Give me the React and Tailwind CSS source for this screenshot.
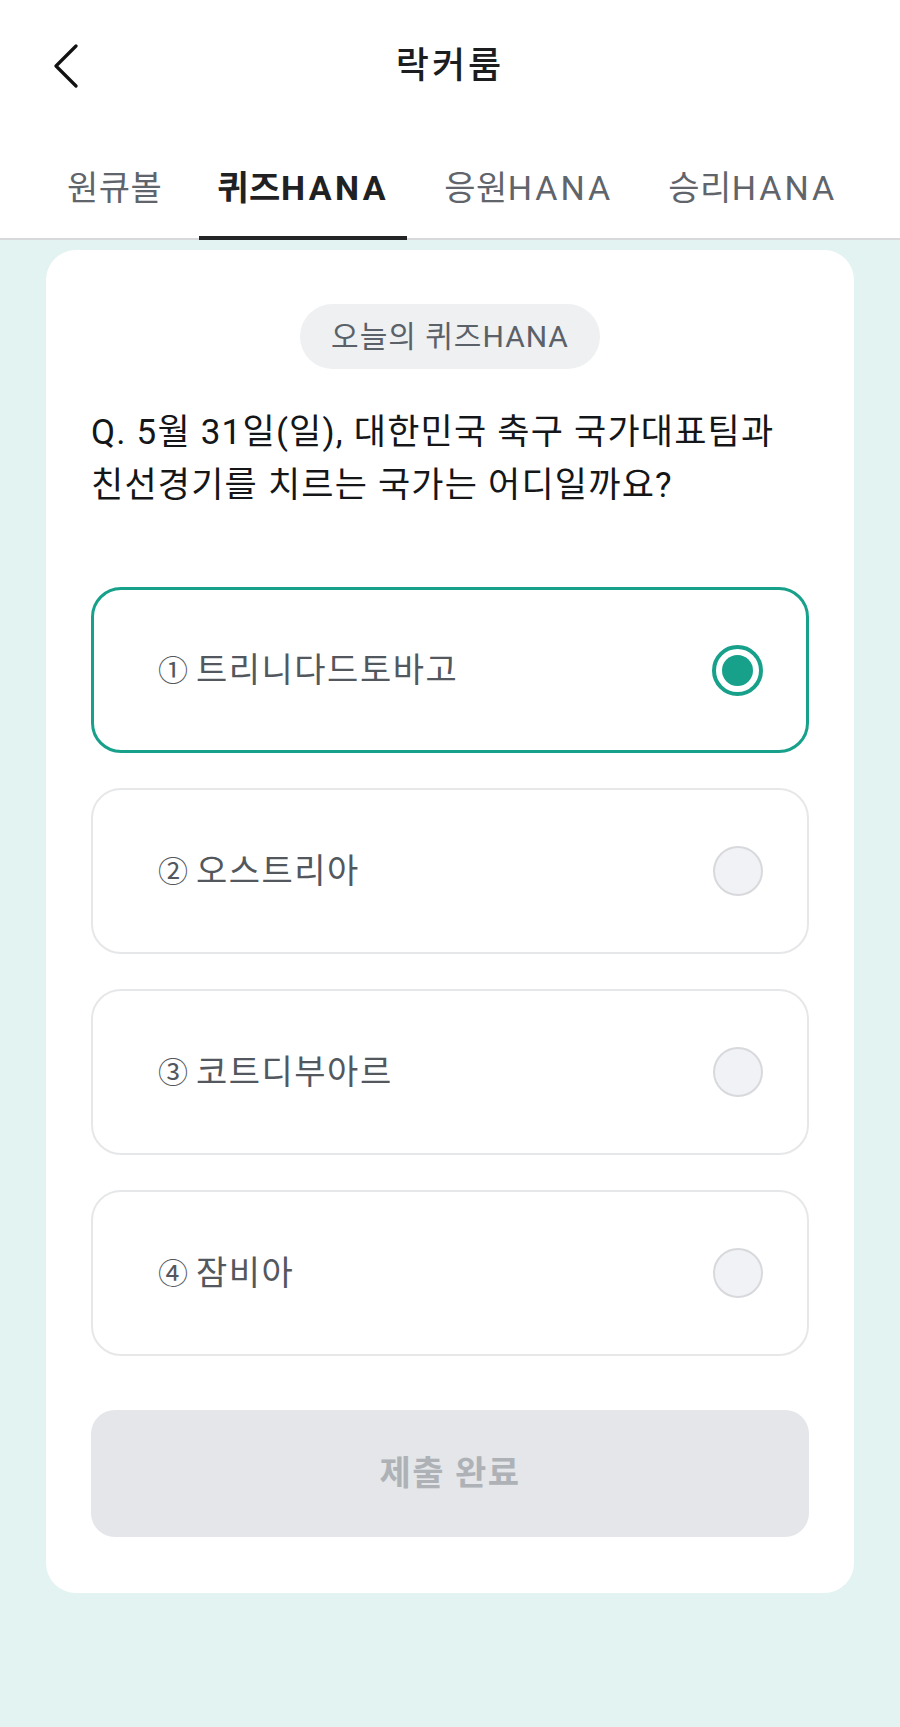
import { useState } from "react"

const FONT = { fontFamily: 'Roboto, "Noto Sans CJK KR", "Noto Sans", sans-serif' }

const options = [
  { mark: "①", label: "트리니다드토바고" },
  { mark: "②", label: "오스트리아" },
  { mark: "③", label: "코트디부아르" },
  { mark: "④", label: "잠비아" },
]

const tabs = [
  { ko: "원큐볼", en: "" },
  { ko: "퀴즈", en: "HANA" },
  { ko: "응원", en: "HANA" },
  { ko: "승리", en: "HANA" },
]

const App = () => {
  const [selected, setSelected] = useState(0)
  const [activeTab, setActiveTab] = useState(1)

  return (
    <div className="min-h-[1727px] bg-[#e3f3f1] flex flex-col" style={FONT}>
      {/* Header */}
      <div className="bg-white">
        <div className="h-[132px] flex items-center">
          <div className="w-[80px] pl-[52px] flex items-center">
            <svg width="28" height="44" viewBox="0 0 28 44" fill="none">
              <path d="M24 2 L4 22 L24 42" stroke="#111" strokeWidth="3.2" strokeLinecap="round" strokeLinejoin="round" />
            </svg>
          </div>
          <h1 className="flex-1 text-center text-[36px] tracking-[3px] font-medium text-[#1b1d1f]">락커룸</h1>
          <div className="w-[80px]" />
        </div>

        {/* Tabs */}
        <div className="flex gap-[19px] pl-[49px] border-b-2 border-[#d7d9db] h-[108px]">
          {tabs.map((t, i) => (
            <button
              key={t.ko}
              onClick={() => setActiveTab(i)}
              className={
                i === activeTab
                  ? "px-[18px] -mb-[2px] border-b-4 border-[#222426] text-[34px] tracking-[0.5px] font-bold text-[#1f2123] flex items-center pt-[8px]"
                  : "px-[18px] -mb-[2px] border-b-4 border-transparent text-[34px] tracking-[0.5px] text-[#5f656b] flex items-center pt-[8px]"
              }
            >
              {t.ko}
              {t.en && <span className={i === activeTab ? "tracking-[3.5px]" : "tracking-[3px]"}>{t.en}</span>}
            </button>
          ))}
        </div>
      </div>

      {/* Quiz card */}
      <div className="mx-[46px] mt-[10px] bg-white rounded-[30px] px-[45px] pt-[54px] pb-[56px] flex flex-col">
        <div className="self-center w-[300px] h-[65px] rounded-full bg-[#eef0f2] flex items-center justify-center text-[30px] tracking-[1px] text-[#5b6168]">
          오늘의 퀴즈HANA
        </div>

        <p className="mt-[37px] text-[35px] tracking-[1.2px] leading-[53px] text-[#141618]">
          Q. 5월 31일(일), 대한민국 축구 국가대표팀과
          <br />
          친선경기를 치르는 국가는 어디일까요?
        </p>

        <div className="mt-[75px] flex flex-col gap-[35px]">
          {options.map((o, i) => (
            <button
              key={o.label}
              onClick={() => setSelected(i)}
              className={
                i === selected
                  ? "h-[166px] rounded-[30px] border-[3px] border-[#17a08a] flex items-center justify-between pl-[64px] pr-[43px]"
                  : "h-[166px] rounded-[30px] border-2 border-[#e6e7e9] flex items-center justify-between pl-[65px] pr-[44px]"
              }
            >
              <span className="flex items-center gap-[8px] text-[34px] tracking-[1.5px] text-[#53585e]">
                <span className="text-[30px] tracking-normal">{o.mark}</span>
                <span>{o.label}</span>
              </span>
              {i === selected ? (
                <span className="w-[51px] h-[51px] rounded-full border-[4px] border-[#17a08a] flex items-center justify-center">
                  <span className="w-[31px] h-[31px] rounded-full bg-[#17a08a]" />
                </span>
              ) : (
                <span className="w-[50px] h-[50px] rounded-full border-2 border-[#d8d9dc] bg-[#f1f2f5]" />
              )}
            </button>
          ))}
        </div>

        <button className="mt-[54px] h-[127px] rounded-[24px] bg-[#e4e6e9] text-[34px] tracking-[1.5px] font-semibold text-[#aeb2b7]">
          제출 완료
        </button>
      </div>
    </div>
  )
}

export default App
